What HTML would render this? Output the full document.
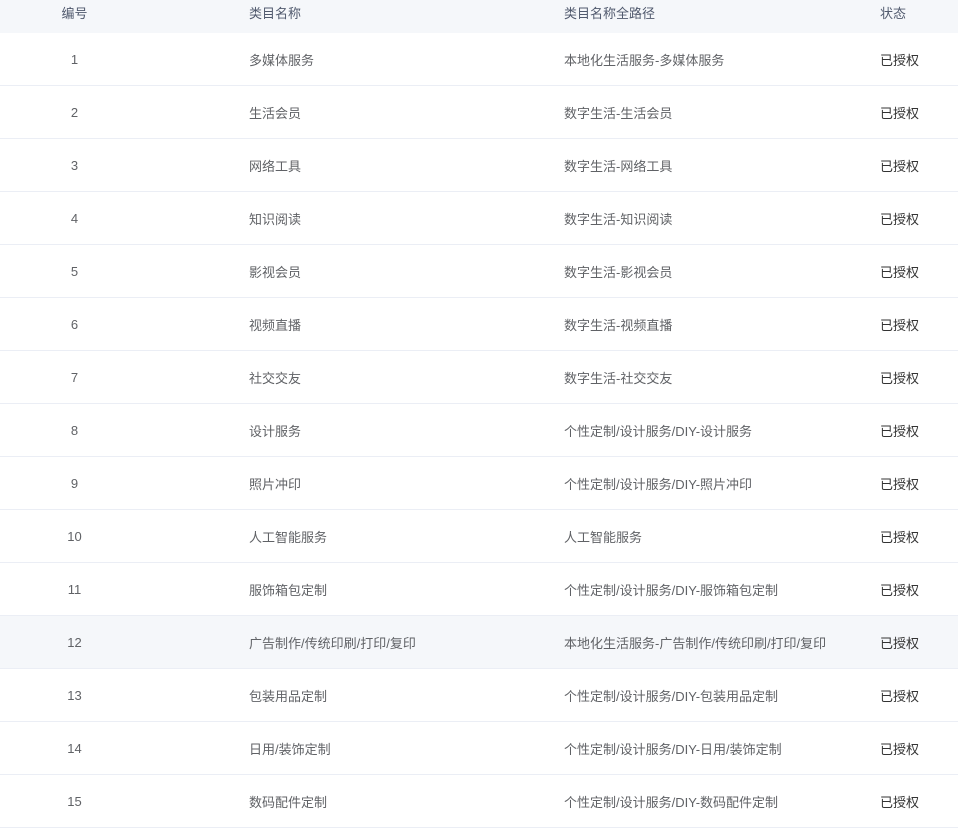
<!DOCTYPE html>
<html><head><meta charset="utf-8"><style>
body{margin:0;background:#fff;font-family:"Liberation Sans","Noto Sans CJK SC",sans-serif;font-size:13px;color:#606266;width:958px;height:827px;overflow:hidden}
table{border-collapse:collapse;width:958px;table-layout:fixed}
th{height:33px;padding:0;background:#f5f7fa;font-weight:normal;color:#515a6e;text-align:left;vertical-align:top;line-height:28px}
td{height:52px;border-bottom:1px solid #ebeef5;padding:0;vertical-align:middle;text-align:left}
.c1{text-align:center;padding-right:100px !important}
td.s{color:#333}
tr.h td{background:#f5f7fa}
</style></head><body>
<table>
<colgroup><col style="width:249px"><col style="width:315px"><col style="width:316px"><col style="width:78px"></colgroup>
<tr><th class="c1">编号</th><th>类目名称</th><th>类目名称全路径</th><th>状态</th></tr>
<tr><td class="c1">1</td><td>多媒体服务</td><td>本地化生活服务-多媒体服务</td><td class="s">已授权</td></tr>
<tr><td class="c1">2</td><td>生活会员</td><td>数字生活-生活会员</td><td class="s">已授权</td></tr>
<tr><td class="c1">3</td><td>网络工具</td><td>数字生活-网络工具</td><td class="s">已授权</td></tr>
<tr><td class="c1">4</td><td>知识阅读</td><td>数字生活-知识阅读</td><td class="s">已授权</td></tr>
<tr><td class="c1">5</td><td>影视会员</td><td>数字生活-影视会员</td><td class="s">已授权</td></tr>
<tr><td class="c1">6</td><td>视频直播</td><td>数字生活-视频直播</td><td class="s">已授权</td></tr>
<tr><td class="c1">7</td><td>社交交友</td><td>数字生活-社交交友</td><td class="s">已授权</td></tr>
<tr><td class="c1">8</td><td>设计服务</td><td>个性定制/设计服务/DIY-设计服务</td><td class="s">已授权</td></tr>
<tr><td class="c1">9</td><td>照片冲印</td><td>个性定制/设计服务/DIY-照片冲印</td><td class="s">已授权</td></tr>
<tr><td class="c1">10</td><td>人工智能服务</td><td>人工智能服务</td><td class="s">已授权</td></tr>
<tr><td class="c1">11</td><td>服饰箱包定制</td><td>个性定制/设计服务/DIY-服饰箱包定制</td><td class="s">已授权</td></tr>
<tr class="h"><td class="c1">12</td><td>广告制作/传统印刷/打印/复印</td><td>本地化生活服务-广告制作/传统印刷/打印/复印</td><td class="s">已授权</td></tr>
<tr><td class="c1">13</td><td>包装用品定制</td><td>个性定制/设计服务/DIY-包装用品定制</td><td class="s">已授权</td></tr>
<tr><td class="c1">14</td><td>日用/装饰定制</td><td>个性定制/设计服务/DIY-日用/装饰定制</td><td class="s">已授权</td></tr>
<tr><td class="c1">15</td><td>数码配件定制</td><td>个性定制/设计服务/DIY-数码配件定制</td><td class="s">已授权</td></tr>
</table>
</body></html>
